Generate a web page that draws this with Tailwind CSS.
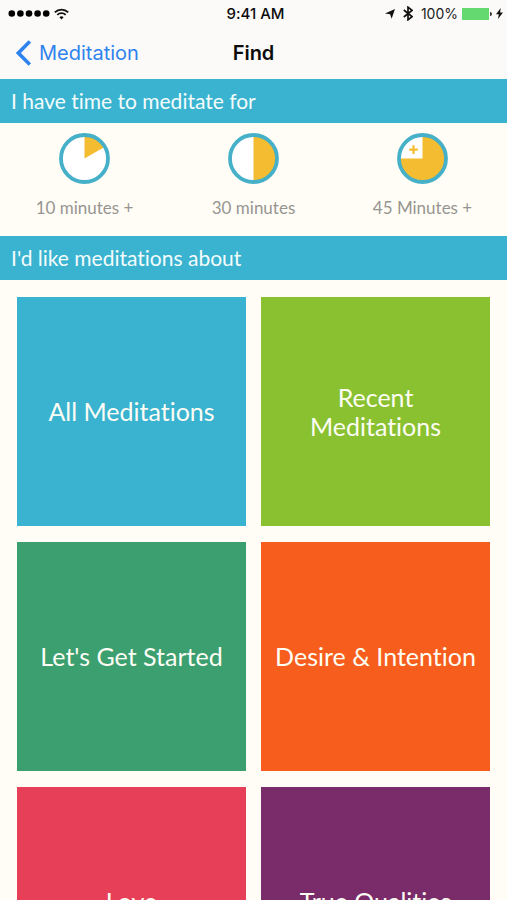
<!DOCTYPE html>
<html lang="en">
<head>
<meta charset="utf-8">
<meta name="viewport" content="width=device-width, initial-scale=1">
<title>Find</title>
<script src="https://cdn.jsdelivr.net/npm/@tailwindcss/browser@4"></script>
</head>
<body class="bg-[#fffdf6] font-[Lato,sans-serif] [font-variant-ligatures:none]">
<div class="flex h-dvh flex-col overflow-hidden">
  <header class="shrink-0 bg-[#fbfaf8] font-[Inter,sans-serif] text-[#0c0c0c]">
    <div class="grid h-[27px] grid-cols-[1fr_auto_1fr] items-center pr-1 pl-2 text-[14px] leading-4">
      <div class="flex items-center gap-1">
        <svg class="h-[7px] w-[42px]" viewBox="0 0 42 7" fill="#000" role="img" aria-label="Signal strength">
          <circle cx="3.8" cy="3.5" r="3.3"/><circle cx="12.4" cy="3.5" r="3.3"/><circle cx="21" cy="3.5" r="3.3"/><circle cx="29.6" cy="3.5" r="3.3"/><circle cx="38.2" cy="3.5" r="3.3"/>
        </svg>
        <svg class="h-3 w-[15px]" viewBox="0 0 15 12" fill="none" stroke="#111" stroke-width="1.8" role="img" aria-label="Wi-Fi">
          <path d="M.8 4.3a9.5 9.5 0 0 1 13.4 0M3.3 6.9a6 6 0 0 1 8.4 0"/>
          <path d="M7.5 11.4 5.4 9.2a3 3 0 0 1 4.2 0Z" fill="#111" stroke="none"/>
        </svg>
      </div>
      <div class="text-[15px] font-medium">9:41 AM</div>
      <div class="flex items-center justify-end">
        <svg class="mr-2 h-[10px] w-[10px]" viewBox="0 0 10 10" fill="#111" role="img" aria-label="Location"><path d="M10 0 6.6 9.8 5.1 5.2 0 4.4Z"/></svg>
        <svg class="mr-2 h-[15px] w-[10px]" viewBox="0 0 10 15" fill="none" stroke="#111" stroke-width="1.7" role="img" aria-label="Bluetooth"><path d="M.8 4 9 10.6 5 13.8V1.2l4 3.2L.8 11"/></svg>
        <span class="mr-1 text-[#222]">100%</span>
        <svg class="mr-1 h-3 w-[30px]" viewBox="0 0 30 12" role="img" aria-label="Battery full"><path d="M0 0h27v12H0z" fill="#63d970"/><path d="M28 4a2 2 0 0 1 0 4Z" fill="#333"/></svg>
        <svg class="h-[11px] w-[7px]" viewBox="0 0 7 11" fill="#111" role="img" aria-label="Charging"><path d="M4.7 0 0 6.2h2.8L2 11l5-6.5H4.1Z"/></svg>
      </div>
    </div>
    <nav class="grid h-[52px] grid-cols-[1fr_auto_1fr] items-center px-4 text-[20px] leading-6">
      <a href="#" class="flex items-center gap-2 text-[#2f83ee]">
        <svg class="h-[26px] w-[15px]" viewBox="0 0 15 26" fill="none" stroke="currentColor" stroke-width="3.6" aria-hidden="true"><path d="M13.8 1.4 2.4 13l11.4 11.6"/></svg>
        Meditation
      </a>
      <h1 class="font-semibold">Find</h1>
    </nav>
  </header>

  <main class="min-h-0 flex-1 overflow-y-auto [scrollbar-width:none]">
    <h2 class="flex h-11 items-center bg-[#39b3d0] px-[11px] text-[21px] leading-6 text-[#f4fcfc]">I have time to meditate for</h2>
    <div class="grid h-[113px] grid-cols-3 text-[17px] leading-6 text-[#969591]">
      <button type="button" class="flex flex-col items-center gap-3 pt-[10px]">
        <svg class="size-[51px]" viewBox="0 0 51 51" aria-hidden="true"><circle cx="25.5" cy="25.5" r="23.5" fill="#fff"/><path d="M25.5 25.5V2a23.5 23.5 0 0 1 20.4 11.8Z" fill="#f4bc30"/><circle cx="25.5" cy="25.5" r="23.5" fill="none" stroke="#45b0c8" stroke-width="3.8"/></svg>
        10 minutes +
      </button>
      <button type="button" class="flex flex-col items-center gap-3 pt-[10px]">
        <svg class="size-[51px]" viewBox="0 0 51 51" aria-hidden="true"><circle cx="25.5" cy="25.5" r="23.5" fill="#fff"/><path d="M25.5 2a23.5 23.5 0 0 1 0 47Z" fill="#f4bc30"/><circle cx="25.5" cy="25.5" r="23.5" fill="none" stroke="#45b0c8" stroke-width="3.8"/></svg>
        30 minutes
      </button>
      <button type="button" class="flex flex-col items-center gap-3 pt-[10px]">
        <svg class="size-[51px]" viewBox="0 0 51 51" aria-hidden="true"><circle cx="25.5" cy="25.5" r="23.5" fill="#fff"/><path d="M25.5 25.5V2A23.5 23.5 0 1 1 2 25.5Z" fill="#f4bc30"/><path d="M16.5 12.3v8.6M12.2 16.6h8.6" stroke="#f4bc30" stroke-width="2.2"/><circle cx="25.5" cy="25.5" r="23.5" fill="none" stroke="#45b0c8" stroke-width="3.8"/></svg>
        45 Minutes +
      </button>
    </div>
    <h2 class="flex h-11 items-center bg-[#39b3d0] px-[11px] text-[21px] leading-6 text-[#f4fcfc]">I'd like meditations about</h2>
    <div class="grid grid-cols-2 gap-x-[15px] gap-y-4 px-[17px] py-[17px] text-[25px] leading-[29px] text-[#fdfdf5]">
      <a href="#" class="flex aspect-square items-center justify-center bg-[#39b3d0] px-3 text-center">All Meditations</a>
      <a href="#" class="flex aspect-square items-center justify-center bg-[#89c131] px-3 text-center">Recent<br>Meditations</a>
      <a href="#" class="flex aspect-square items-center justify-center bg-[#3c9f70] px-3 text-center">Let's Get Started</a>
      <a href="#" class="flex aspect-square items-center justify-center bg-[#f75d1c] px-3 text-center">Desire &amp; Intention</a>
      <a href="#" class="flex aspect-square items-center justify-center bg-[#e83f58] px-3 text-center">Love</a>
      <a href="#" class="flex aspect-square items-center justify-center bg-[#7a2b69] px-3 text-center">True Qualities</a>
    </div>
  </main>
</div>
</body>
</html>
